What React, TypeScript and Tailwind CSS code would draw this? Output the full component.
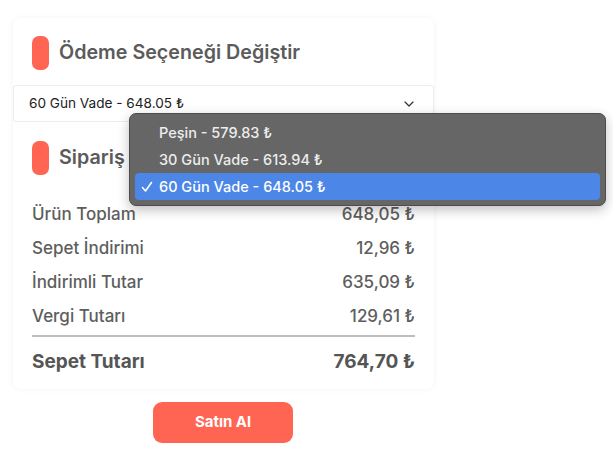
import React from 'react';
import { ChevronDown } from 'lucide-react';

const rows = [
  { label: 'Ürün Toplam', value: '648,05 ₺' },
  { label: 'Sepet İndirimi', value: '12,96 ₺' },
  { label: 'İndirimli Tutar', value: '635,09 ₺' },
  { label: 'Vergi Tutarı', value: '129,61 ₺' }
];

const options = [
  { label: 'Peşin - 579.83 ₺', selected: false },
  { label: '30 Gün Vade - 613.94 ₺', selected: false },
  { label: '60 Gün Vade - 648.05 ₺', selected: true }
];

const SectionTitle = ({ title }: { title: string }) => (
  <div className="flex items-center gap-[10px] px-[19px]">
    <span className="w-[17px] h-[34px] rounded-[7px] bg-[#ff6552]" />
    <h2 className="text-[19.7px] font-semibold text-[#5b5b5b] leading-none">{title}</h2>
  </div>
);

const App = () => {
  return (
    <div className="relative w-[613px] h-[475px] bg-white font-['Inter','Liberation_Sans',sans-serif]">
      <div className="pt-[18px] pl-[13px]">
        <div className="w-[421px] rounded-lg bg-white shadow-[0_0_6px_rgba(0,0,0,0.05)] pb-[2px]">
          <div className="pt-[18px] pb-[15px]">
            <SectionTitle title="Ödeme Seçeneği Değiştir" />
          </div>
          <div className="h-[37px] flex items-center justify-between pl-[15px] pr-[16px] border border-[#ececec] rounded-[3px] bg-white">
            <span className="text-[13.6px] text-[#222]">60 Gün Vade - 648.05 ₺</span>
            <ChevronDown className="w-[16px] h-[16px] text-[#333]" strokeWidth={1.8} />
          </div>
          <div className="pt-[19px] pb-[23px]">
            <SectionTitle title="Sipariş Özeti" />
          </div>
          <div className="px-[19px]">
            {rows.map((row) => (
              <div key={row.label} className="h-[34px] flex items-center justify-between text-[17px] font-medium text-[#5e5e5e]">
                <span>{row.label}</span>
                <span>{row.value}</span>
              </div>
            ))}
            <div className="mt-[1px] h-[2px] bg-[#bdbdbd]" />
            <div className="h-[50px] flex items-center justify-between text-[19px] font-bold text-[#555]">
              <span>Sepet Tutarı</span>
              <span>764,70 ₺</span>
            </div>
          </div>
        </div>
      </div>
      <div className="flex justify-center w-[446px] pt-[13px]">
        <button className="w-[140px] h-[41px] rounded-[9px] bg-[#ff6552] text-white text-[15px] font-bold">
          Satın Al
        </button>
      </div>

      <div className="absolute left-[129px] top-[113px] w-[477px] h-[93px] rounded-[7px] bg-[#666] border border-[#4d4d4d] px-[5px] pt-[5px] shadow-[0_4px_12px_rgba(0,0,0,0.25)]">
        {options.map((opt) => (
          <div
            key={opt.label}
            className={`h-[27px] flex items-center rounded-[4px] text-[14.5px] font-medium ${opt.selected ? 'bg-[#4c86e6] text-white' : 'text-[#ececec]'}`}
          >
            <span className="w-[24px] pl-[6px] flex items-center">
              {opt.selected && (
                <svg width="12" height="12" viewBox="0 0 12 12" fill="none">
                  <path d="M1.5 6.5 L4.5 10 L10.5 1.5" stroke="white" strokeWidth="1.6" strokeLinecap="round" strokeLinejoin="round" />
                </svg>
              )}
            </span>
            <span>{opt.label}</span>
          </div>
        ))}
      </div>
    </div>
  );
};

export default App;
